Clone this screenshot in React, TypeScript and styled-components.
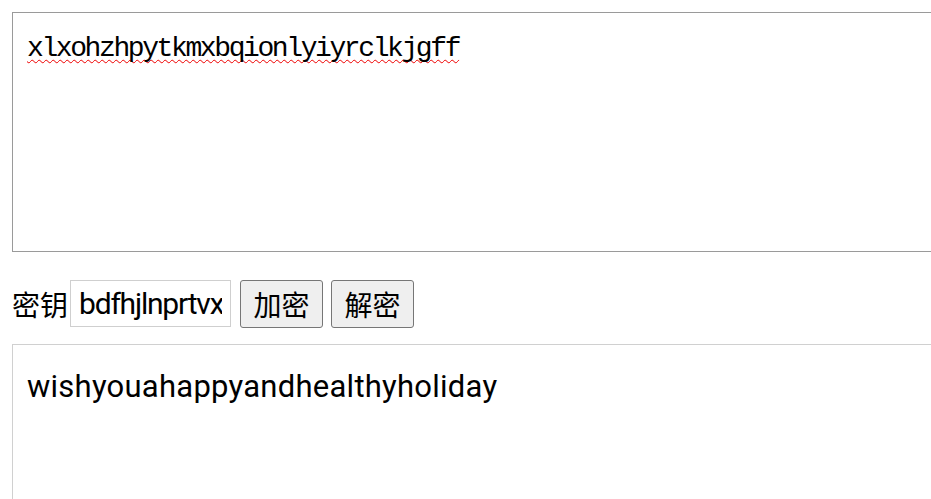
import styled, { createGlobalStyle } from 'styled-components';

const GlobalStyle = createGlobalStyle`
	html, body {
		margin: 0;
		padding: 0;
		background: #fff;
		overflow: hidden;
	}
	body {
		font-family: Roboto, 'Noto Sans CJK SC', sans-serif;
		color: #000;
	}
`;

const Page = styled.div`
	display: flex;
	flex-direction: column;
	padding: 12px 0 0 12px;
	width: 1100px;
`;

const TextBox = styled.textarea<{ $mono?: boolean; $dark?: boolean }>`
	box-sizing: border-box;
	width: 1000px;
	height: 240px;
	margin: 0;
	padding: ${(p) => (p.$mono ? '19px 14px' : '23px 14px')};
	border: 1px solid ${(p) => (p.$dark ? '#9a9a9a' : '#d0d0d0')};
	border-radius: 0;
	resize: none;
	outline: none;
	background: #fff;
	color: #000;
	font-family: ${(p) => (p.$mono ? "'Liberation Mono', monospace" : "Roboto, 'Noto Sans CJK SC', sans-serif")};
	font-size: ${(p) => (p.$mono ? '28px' : '31px')};
	letter-spacing: ${(p) => (p.$mono ? '-2.4px' : '0.25px')};
	line-height: 1.2;
	text-decoration: ${(p) => (p.$mono ? 'underline wavy #e00' : 'none')};
	text-decoration-thickness: 1px;
	text-underline-offset: 3px;
	text-decoration-skip-ink: none;
`;

const KeyRow = styled.div`
	display: flex;
	align-items: center;
	margin: 27px 0 16px;
	height: 49px;
`;

const Label = styled.span`
	font-family: 'Noto Sans CJK SC', sans-serif;
	font-size: 28px;
	line-height: 1;
	margin-right: 2px;
`;

const KeyInput = styled.input`
	box-sizing: border-box;
	width: 161px;
	height: 47px;
	margin: 0 9px 0 0;
	padding: 0 8px;
	border: 1px solid #cfcfcf;
	border-radius: 0;
	outline: none;
	font-family: Roboto, sans-serif;
	font-size: 30px;
	letter-spacing: -1.2px;
	color: #000;
`;

const ActionButton = styled.button`
	box-sizing: border-box;
	width: 83px;
	height: 48px;
	margin: 0 8px 0 0;
	padding: 0;
	border: 1px solid #767676;
	border-radius: 3px;
	background: #efefef;
	color: #000;
	font-family: 'Noto Sans CJK SC', sans-serif;
	font-size: 28px;
	line-height: 1;
`;

export default function App() {
	return (
		<Page>
			<GlobalStyle />
			<TextBox $mono $dark defaultValue="xlxohzhpytkmxbqionlyiyrclkjgff" />
			<KeyRow>
				<Label>密钥</Label>
				<KeyInput defaultValue="bdfhjlnprtvx" />
				<ActionButton>加密</ActionButton>
				<ActionButton>解密</ActionButton>
			</KeyRow>
			<TextBox defaultValue="wishyouahappyandhealthyholiday" />
		</Page>
	);
}
